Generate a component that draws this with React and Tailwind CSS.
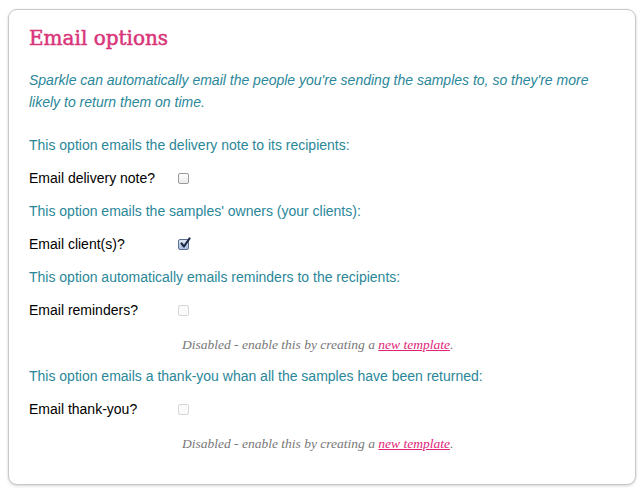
import React from "react";

const options = [
  { hint: "This option emails the delivery note to its recipients:", label: "Email delivery note?", state: "off" },
  { hint: "This option emails the samples' owners (your clients):", label: "Email client(s)?", state: "on" },
  { hint: "This option automatically emails reminders to the recipients:", label: "Email reminders?", state: "disabled" },
  { hint: "This option emails a thank-you whan all the samples have been returned:", label: "Email thank-you?", state: "disabled" },
];

function Checkbox({ state }) {
  if (state === "on") {
    return (
      <span className="relative block w-[11px] h-[11px] rounded-[2px] border border-[#5a6d8f] bg-gradient-to-b from-[#dfe8f5] to-[#a9bfdf]">
        <svg className="absolute -top-[3px] left-[0px] w-[13px] h-[13px]" viewBox="0 0 13 13" fill="none">
          <path d="M2.5 6.5 L5 9.5 L10.5 1.5" stroke="#1e2a45" strokeWidth="2.2" strokeLinecap="round" strokeLinejoin="round" />
        </svg>
      </span>
    );
  }
  if (state === "disabled") {
    return <span className="block w-[11px] h-[11px] rounded-[2px] border border-[#d6d6d6] bg-[#fafafa]" />;
  }
  return <span className="block w-[11px] h-[11px] rounded-[2px] border border-[#9a9a9a] bg-gradient-to-b from-white to-[#e9e9e9]" />;
}

export default function App() {
  return (
    <div className="min-h-screen bg-white pt-[9px] px-[8px] font-['Liberation_Sans',Arial,sans-serif]">
      <div className="w-[628px] h-[476px] rounded-[9px] border border-[#c8c8c8] bg-white shadow-[0_1px_3px_rgba(0,0,0,0.18)] px-[20px] pt-[14px]">
        <h1 className="font-['DejaVu_Serif',Georgia,serif] text-[20px] leading-[28px] text-[#d8357a] [-webkit-text-stroke:0.5px_#d8357a]">Email options</h1>
        <p className="mt-[17px] italic text-[14px] leading-[22px] text-[#2a8799]">
          Sparkle can automatically email the people you're sending the samples to, so they're more likely to return them on time.
        </p>
        <div className="mt-[16px]">
          {options.map((o) => (
            <div key={o.label}>
              <div className="h-[33px] flex items-center text-[14px] text-[#2a8799]">{o.hint}</div>
              <div className="h-[33px] flex items-center text-[14px] text-black">
                <span className="w-[149px]">{o.label}</span>
                <Checkbox state={o.state} />
              </div>
              {o.state === "disabled" && (
                <div className="h-[33px] flex items-center pl-[153px] pt-[4px] font-['Liberation_Serif',Georgia,serif] italic text-[13.5px] text-[#777]">
                  <span>
                    Disabled - enable this by creating a{" "}
                    <a href="#" className="text-[#e0237a] underline">new template</a>.
                  </span>
                </div>
              )}
            </div>
          ))}
        </div>
      </div>
    </div>
  );
}
